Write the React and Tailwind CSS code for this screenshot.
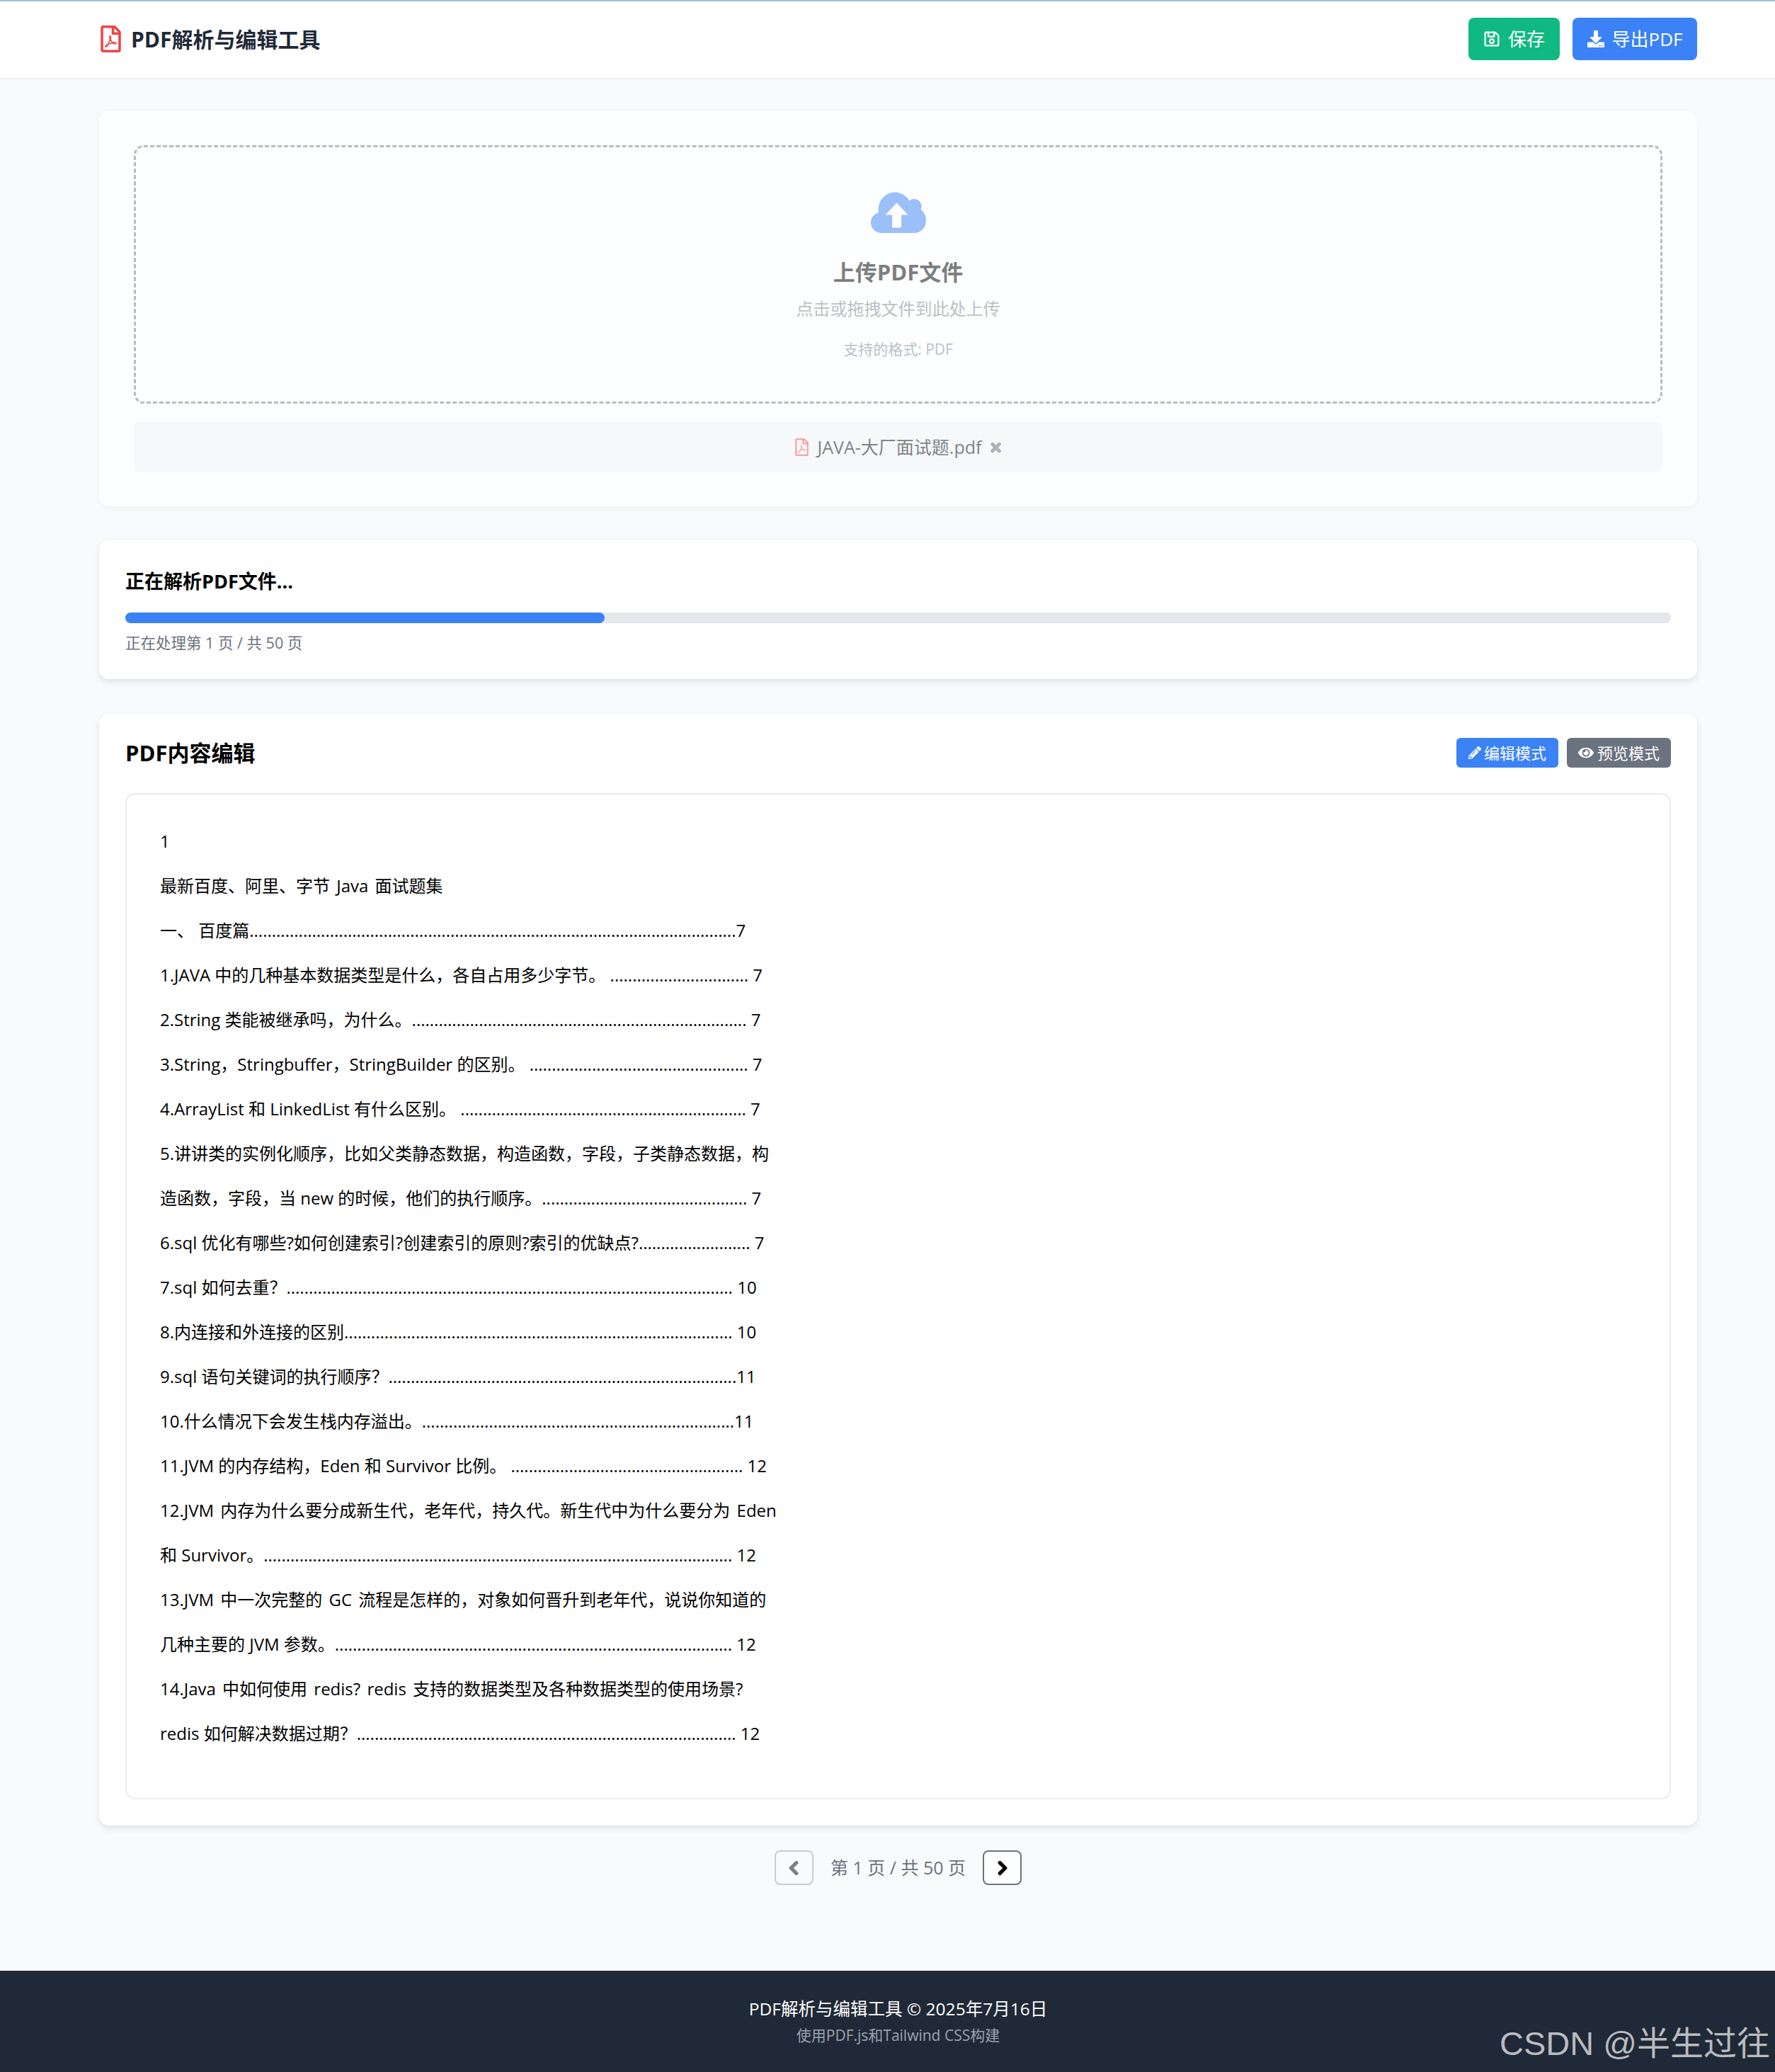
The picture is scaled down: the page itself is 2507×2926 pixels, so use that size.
import React from "react";
import {
    FaRegFilePdf,
    FaRegSave,
    FaDownload,
    FaTimes,
    FaPencilAlt,
    FaEye,
    FaChevronLeft,
    FaChevronRight,
} from "react-icons/fa";

const FONT = "[font-family:'Open_Sans','Noto_Sans_CJK_SC',sans-serif]";

// text, number of leader dots, page number
const LINES = [
    ["1"],
    ["最新百度、阿里、字节 Java 面试题集"],
    ["一、 百度篇", 109, "7"],
    ["1.JAVA 中的几种基本数据类型是什么，各自占用多少字节。 ", 31, " 7"],
    ["2.String 类能被继承吗，为什么。", 75, " 7"],
    ["3.String，Stringbuffer，StringBuilder 的区别。 ", 49, " 7"],
    ["4.ArrayList 和 LinkedList 有什么区别。 ", 64, " 7"],
    ["5.讲讲类的实例化顺序，比如父类静态数据，构造函数，字段，子类静态数据，构"],
    ["造函数，字段，当 new 的时候，他们的执行顺序。", 46, " 7"],
    ["6.sql 优化有哪些?如何创建索引?创建索引的原则?索引的优缺点?", 25, " 7"],
    ["7.sql 如何去重？", 100, " 10"],
    ["8.内连接和外连接的区别", 87, " 10"],
    ["9.sql 语句关键词的执行顺序？", 78, "11"],
    ["10.什么情况下会发生栈内存溢出。", 70, "11"],
    ["11.JVM 的内存结构，Eden 和 Survivor 比例。 ", 52, " 12"],
    ["12.JVM 内存为什么要分成新生代，老年代，持久代。新生代中为什么要分为 Eden"],
    ["和 Survivor。", 105, " 12"],
    ["13.JVM 中一次完整的 GC 流程是怎样的，对象如何晋升到老年代，说说你知道的"],
    ["几种主要的 JVM 参数。", 89, " 12"],
    ["14.Java 中如何使用 redis? redis 支持的数据类型及各种数据类型的使用场景?"],
    ["redis 如何解决数据过期？", 85, " 12"],
];

const CloudUpload = () => (
    <svg viewBox="0 0 78 60" className="w-[78px] h-[60px]">
        <path
            fill="#9bbff8"
            d="M15 59C6.500 59 0 52.500 0 44.500C0 37.500 4.500 32 11 30.300C10.700 28.800 10.500 27.500 10.500 26C10.500 13 21 1.500 33.500 1.500C43 1.500 51 7 54.500 13.500C56.500 11.700 59 11 61 11C67.500 11 71.500 16 71.500 21.500C71.500 23 71.200 24.500 70.500 26C75 29 78 35 78 41.500C78 52 70 59 61 59Z"
        />
        <path fill="#fdfefe" d="M36.500 16.500L52.500 33.500H43V49.500C43 50.500 42 51.500 41 51.500H32C31 51.500 30 50.500 30 49.500V33.500H20.500Z" />
    </svg>
);

const App = () => {
    return (
        <div className={`${FONT} relative min-h-[2926px] bg-[#f9fafb] flex flex-col text-black`}>
            <header className="h-[110px] pb-[2px] bg-white border-t-2 border-[#a3bfd6] shadow-[0_1px_3px_rgba(0,0,0,0.08)] pl-[140px] pr-[110px] flex items-center justify-between">
                <div className="flex items-center gap-[12px]">
                    <FaRegFilePdf className="text-[#ef4444] w-[33px] h-[38px]" />
                    <h1 className="text-[30px] font-bold text-[#1f2937]">PDF解析与编辑工具</h1>
                </div>
                <div className="flex gap-[18px]">
                    <button className="w-[129px] h-[60px] rounded-lg bg-[#10b981] text-white text-[26px] flex items-center justify-center gap-[11px]">
                        <FaRegSave className="w-[24px] h-[24px]" />
                        保存
                    </button>
                    <button className="w-[176px] h-[60px] rounded-lg bg-[#3b82f6] text-white text-[26px] flex items-center justify-center gap-[11px]">
                        <FaDownload className="w-[24px] h-[24px]" />
                        导出PDF
                    </button>
                </div>
            </header>

            <main className="flex-1 pl-[140px] pr-[110px] pt-[47px]">
                <section className="bg-[#fdfefe] rounded-[14px] shadow-[0_2px_8px_rgba(0,0,0,0.04)] h-[558px] px-[49px] pt-[48px]">
                    <div className="h-[365px] border-[3px] border-dashed border-[#b9bcc2] rounded-[14px] flex flex-col items-center pt-[62px]">
                        <CloudUpload />
                        <h2 className="mt-[33px] text-[31px] leading-[42px] font-bold text-[#7b7f7f]">上传PDF文件</h2>
                        <p className="mt-[13px] text-[24px] leading-[36px] text-[#bcc0c7]">点击或拖拽文件到此处上传</p>
                        <p className="mt-[24px] text-[21px] leading-[30px] text-[#bcc0c7]">支持的格式: PDF</p>
                    </div>
                    <div className="mt-[26px] h-[71px] rounded-lg bg-[#f7f8fa] flex items-center justify-center gap-[12px] text-[25px] text-[#7f8389]">
                        <FaRegFilePdf className="text-[#f8a5a5] w-[21px] h-[25px]" />
                        <span>JAVA-大厂面试题.pdf</span>
                        <FaTimes className="text-[#adb2ba] w-[17px] h-[20px] stroke-[30]" />
                    </div>
                </section>

                <section className="mt-[48px] bg-white rounded-[14px] shadow-[0_4px_10px_rgba(0,0,0,0.1)] h-[196px] px-[37px] pt-[38px]">
                    <h2 className="text-[27px] leading-[40px] font-bold">正在解析PDF文件...</h2>
                    <div className="mt-[24px] h-[15px] rounded-full bg-[#e5e7eb]">
                        <div className="w-[31%] h-full rounded-full bg-[#3b82f6]"></div>
                    </div>
                    <p className="mt-[12px] text-[21.5px] leading-[32px] text-[#6b7280]">正在处理第 1 页 / 共 50 页</p>
                </section>

                <section className="mt-[49px] bg-white rounded-[14px] shadow-[0_4px_10px_rgba(0,0,0,0.1)] h-[1570px] px-[37px] pt-[34px]">
                    <div className="flex items-center justify-between h-[42px]">
                        <h2 className="text-[31px] font-bold">PDF内容编辑</h2>
                        <div className="flex gap-[12px]">
                            <button className="w-[144px] h-[42px] rounded-md bg-[#3b82f6] text-white text-[22px] flex items-center justify-center gap-[4px]">
                                <FaPencilAlt className="w-[18px] h-[18px]" />
                                编辑模式
                            </button>
                            <button className="w-[147px] h-[42px] rounded-md bg-[#6b7280] text-white text-[22px] flex items-center justify-center gap-[5px]">
                                <FaEye className="w-[22px] h-[20px]" />
                                预览模式
                            </button>
                        </div>
                    </div>
                    <div className="mt-[36px] h-[1421px] border-2 border-[#eaebed] rounded-[14px] pl-[47px] pt-[34px]">
                        {LINES.map(([text, dots, page], i) => (
                            <p
                                key={i}
                                className={
                                    dots
                                        ? "h-[63px] leading-[63px] text-[24px] whitespace-pre"
                                        : "h-[63px] leading-[63px] text-[24px] whitespace-pre [word-spacing:3px]"
                                }
                            >
                                {text}
                                {dots ? ".".repeat(dots) : ""}
                                {page}
                            </p>
                        ))}
                    </div>
                </section>

                <div className="mt-[35px] flex items-center justify-center gap-[24px]">
                    <button className="w-[55px] h-[49px] rounded-lg border-2 border-[#c9ccd1] flex items-center justify-center text-[#7f8080]">
                        <FaChevronLeft className="w-[16px] h-[22px] stroke-[40]" />
                    </button>
                    <span className="text-[25px] text-[#6b7280]">第 1 页 / 共 50 页</span>
                    <button className="w-[55px] h-[49px] rounded-lg border-2 border-[#6b7280] bg-white flex items-center justify-center text-black">
                        <FaChevronRight className="w-[16px] h-[22px] stroke-[40]" />
                    </button>
                </div>
            </main>

            <footer className="h-[143px] bg-[#1f2937] flex flex-col items-center pt-[35px] pl-[30px]">
                <p className="text-[24.5px] leading-[38px] text-white">PDF解析与编辑工具 © 2025年7月16日</p>
                <p className="mt-[3px] text-[21px] leading-[30px] text-[#9ca3af]">使用PDF.js和Tailwind CSS构建</p>
            </footer>

            <span className="absolute right-[7px] bottom-[7px] text-[47px] leading-[66px] text-[#b9bbbe] [font-family:'Liberation_Sans','Noto_Sans_CJK_SC',sans-serif]">
                CSDN @半生过往
            </span>
        </div>
    );
};

export default App;
